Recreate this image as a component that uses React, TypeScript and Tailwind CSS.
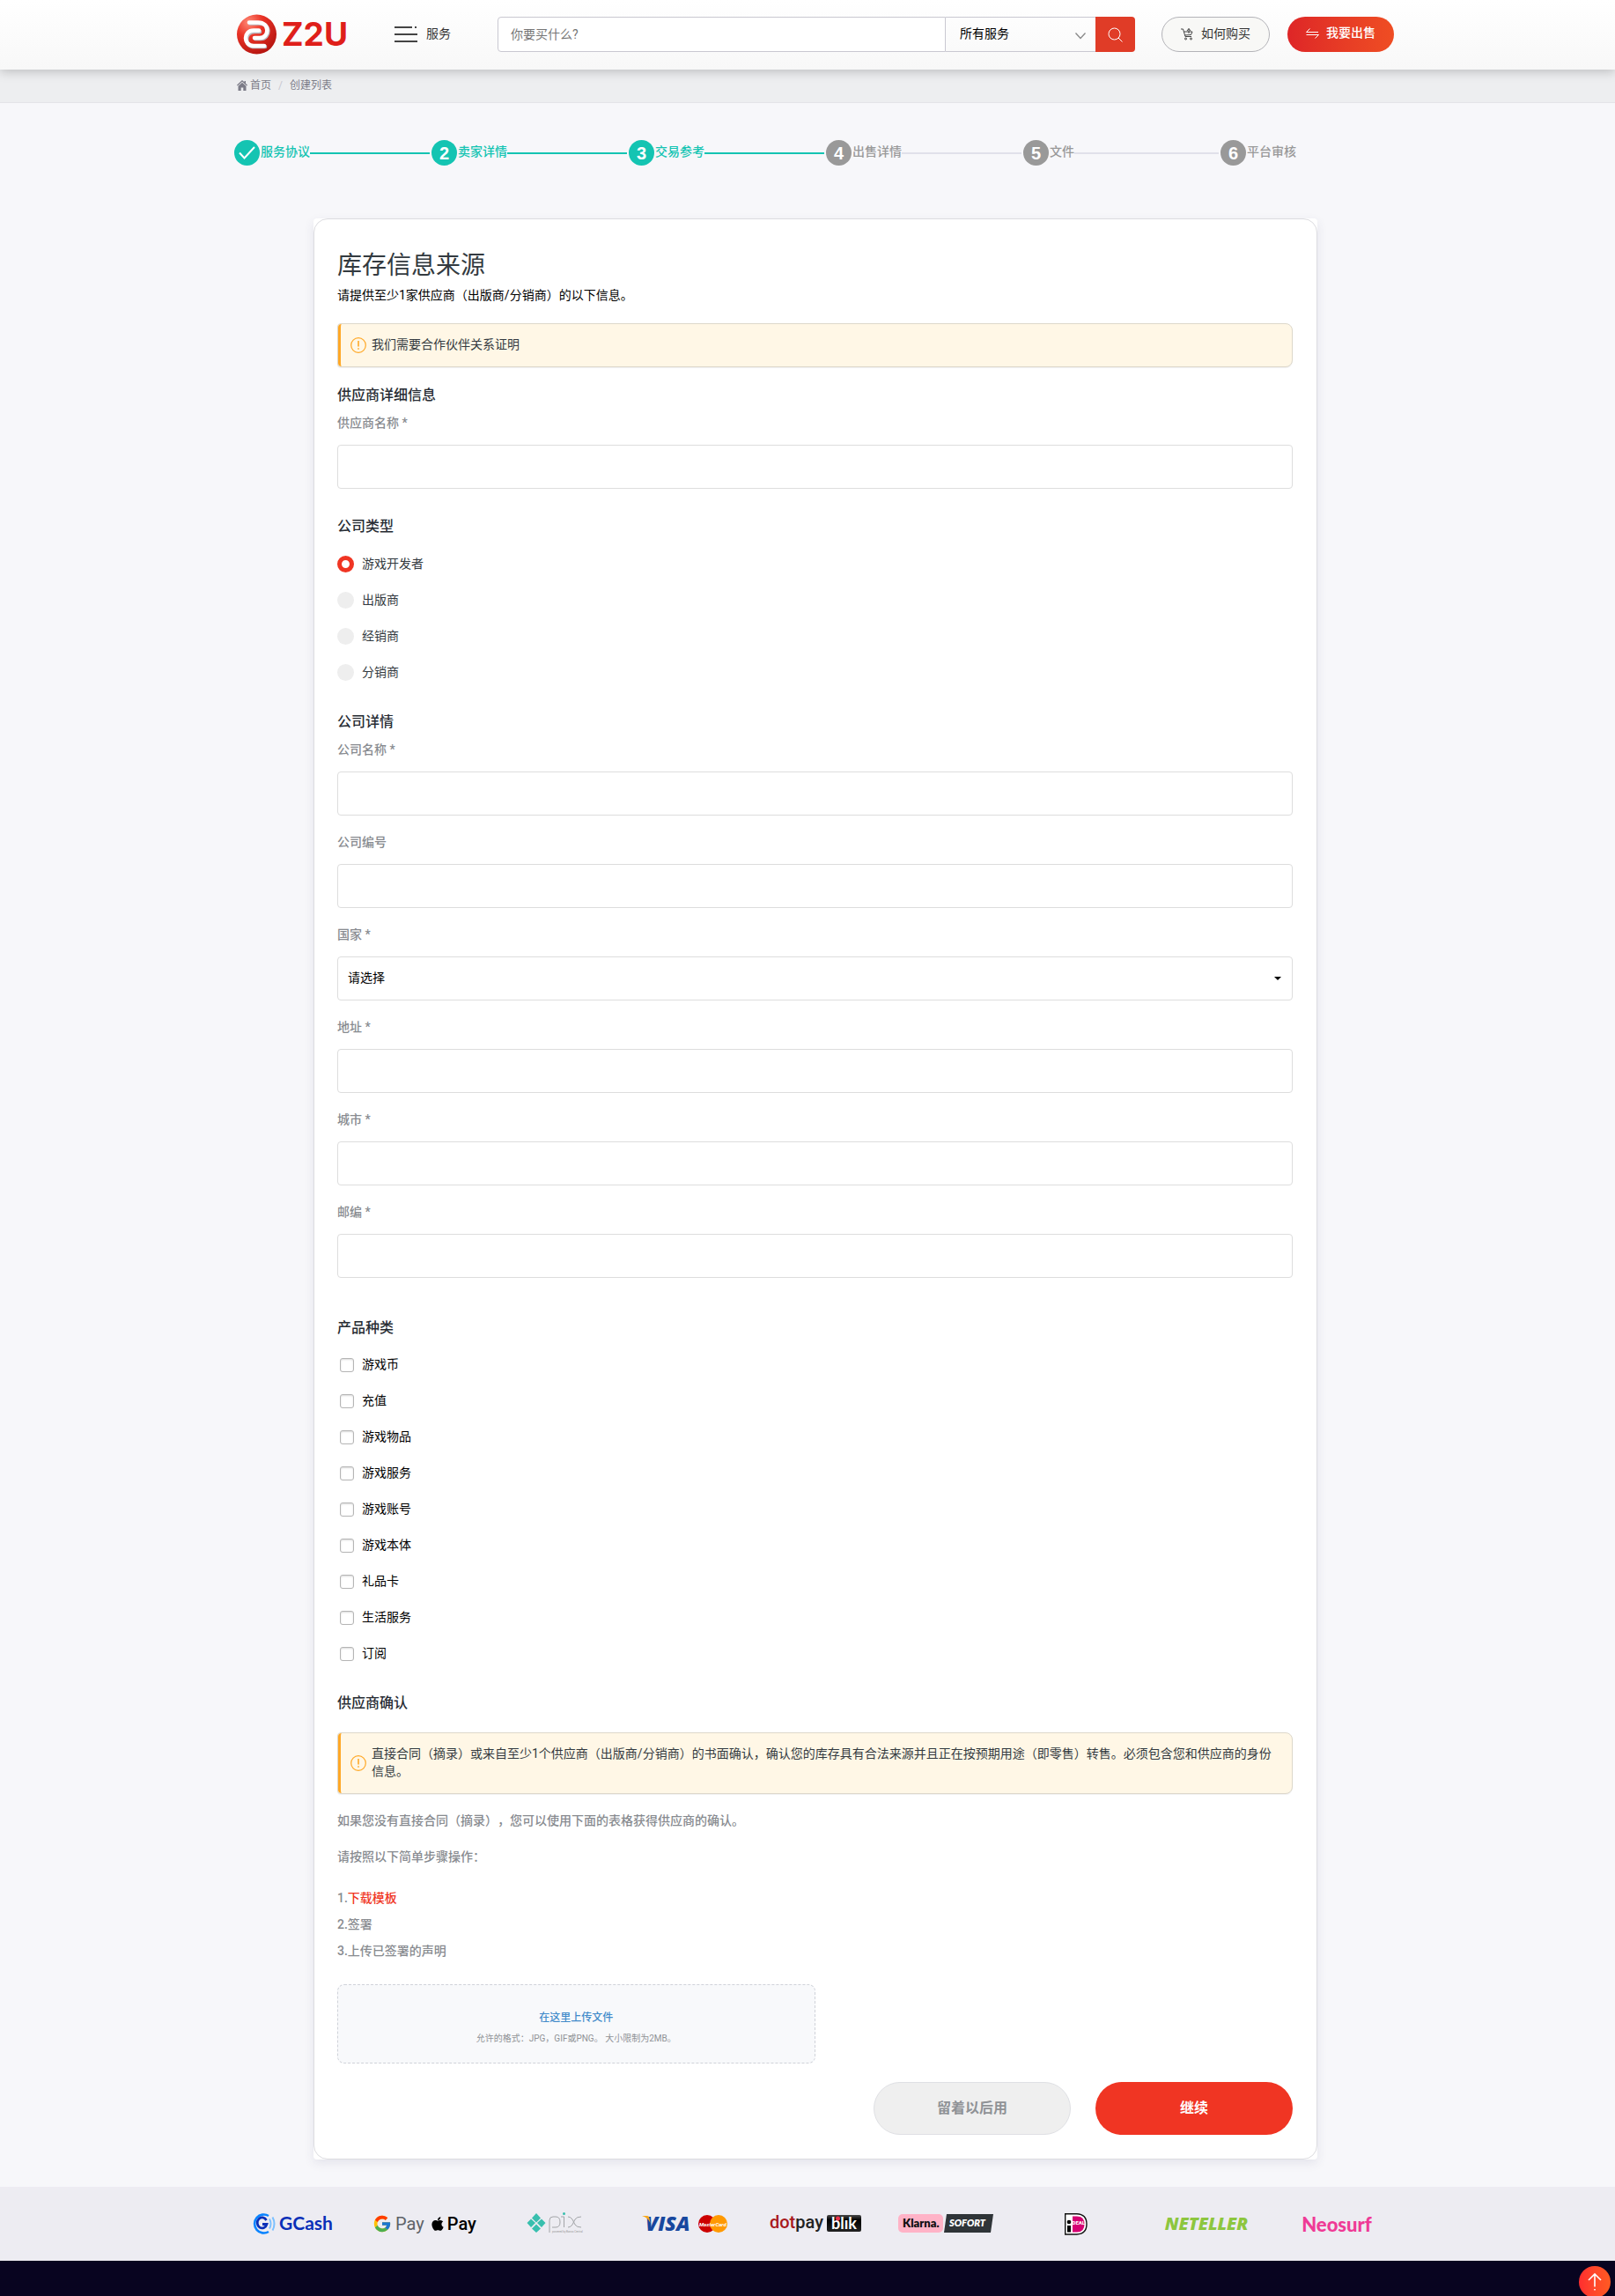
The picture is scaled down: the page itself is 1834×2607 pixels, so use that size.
import { ReactNode, useId, useState } from "react";
import { clsx } from "clsx";
import { FcGoogle } from "react-icons/fc";
import { FaApple } from "react-icons/fa";

const steps = [
  { label: "服务协议", state: "done" },
  { label: "卖家详情", state: "active" },
  { label: "交易参考", state: "active" },
  { label: "出售详情", state: "todo" },
  { label: "文件", state: "todo" },
  { label: "平台审核", state: "todo" },
];

const companyTypes = ["游戏开发者", "出版商", "经销商", "分销商"];

const productTypes = [
  "游戏币",
  "充值",
  "游戏物品",
  "游戏服务",
  "游戏账号",
  "游戏本体",
  "礼品卡",
  "生活服务",
  "订阅",
];

function Logo() {
  return (
    <svg className="overflow-visible" width="128" height="46" viewBox="0 0 128 46" role="img" aria-label="Z2U">
      <defs>
        <radialGradient id="ball" cx="0.3" cy="0.2" r="0.9">
          <stop offset="0" stopColor="#ff8a76" />
          <stop offset="0.4" stopColor="#ea3326" />
          <stop offset="1" stopColor="#b0120e" />
        </radialGradient>
      </defs>
      <circle cx="22.5" cy="23" r="22.5" fill="url(#ball)" />
      <g fill="none" strokeWidth="4.600" strokeLinecap="round" strokeLinejoin="round">
        <path
          d="M15 10.500H25C39 10.500 38 28 27 28H21M32 37H20C8 37 8 20 20 20H26"
          stroke="#b9b9c0"
        />
        <path
          d="M14 9.500H24C38 9.500 37 27 26 27H20M31 36H19C7 36 7 18.500 19 18.500H25"
          stroke="#fff"
        />
      </g>
      <text x="51" y="36" fontSize="37" fontWeight="700" fill="#df1f1a" fontFamily="Inter, sans-serif">
        Z2U
      </text>
    </svg>
  );
}

function Header() {
  return (
    <header className="relative z-10 bg-linear-to-b from-white to-[#f8f8f8] pl-[18px] shadow-[0_2px_12px_rgba(0,0,0,0.22)]">
      <div className="mx-auto flex h-[79px] max-w-[1314px] items-center pb-px">
        <a href="#home" className="w-[179px] shrink-0">
          <Logo />
        </a>
        <button type="button" className="flex w-[117px] shrink-0 items-center gap-2.5 text-sm text-[#333]">
          <svg width="26" height="20" viewBox="0 0 26 20" fill="none" stroke="#444" strokeWidth="2">
            <path d="M0 2h20M23 2h2M0 10h26M0 18h26" />
          </svg>
          <span className="pb-[3px]">服务</span>
        </button>
        <form className="flex h-10 min-w-0 flex-1" onSubmit={(e) => e.preventDefault()}>
          <input
            type="text"
            aria-label="搜索"
            placeholder="你要买什么?"
            className="min-w-0 flex-1 rounded-l border border-[#c9c8d1] bg-white px-3.5 pb-px text-sm placeholder:text-[#757575]"
          />
          <div className="relative w-[170px]">
            <select
              aria-label="服务类别"
              className="h-10 w-full appearance-none border-y border-[#c9c8d1] bg-transparent pb-0.5 pl-4 text-sm text-black"
            >
              <option>所有服务</option>
            </select>
            <svg
              className="pointer-events-none absolute top-[18px] right-[11px]"
              width="12"
              height="8"
              viewBox="0 0 12 8"
              fill="none"
              stroke="#888"
              strokeWidth="1.3"
            >
              <path d="M0.5 0.5 6 6.5l5.500-6" />
            </svg>
          </div>
          <button type="submit" aria-label="搜索" className="grid w-[45px] place-items-center rounded-r bg-[#e03c27]">
            <svg width="17" height="17" viewBox="0 0 17 17" fill="none" stroke="#fff" strokeWidth="1">
              <circle cx="7.500" cy="7.500" r="6.500" />
              <path d="m12 12 4.500 4.500" />
            </svg>
          </button>
        </form>
        <a
          href="#how"
          className="ml-[30px] flex h-10 w-[123px] shrink-0 items-center justify-center gap-2 rounded-full border border-[#b3b3b8] bg-[#f8f8f6] text-sm text-[#333]"
        >
          <svg width="15" height="14" viewBox="0 0 15 14" fill="none" stroke="#444" strokeWidth="1">
            <path d="M0 1h2.500l2.500 8.500h7M3.500 4h9.500l-1.500 3.500-7 .5M9 0.500V6M7 3l2-2.500L11 3" />
            <circle cx="5.500" cy="12" r="1" />
            <circle cx="11.500" cy="12" r="1" />
          </svg>
          <span className="pb-[3px]">如何购买</span>
        </a>
        <a
          href="#sell"
          className="ml-5 flex h-10 w-[121px] shrink-0 items-center justify-center gap-2 rounded-full bg-linear-to-r from-[#de2527] to-[#ef4d23] pb-[3px] text-sm font-medium text-white"
        >
          <svg width="15" height="12" viewBox="0 0 15 12" fill="none" stroke="#fff" strokeWidth="1">
            <path d="M4.500 0.500 0.500 4.500H14M0.500 7.500h14l-4 4" />
          </svg>
          <span className="pb-0.5">我要出售</span>
        </a>
      </div>
    </header>
  );
}

function Breadcrumb() {
  return (
    <nav className="border-b border-[#e4e4e8] bg-[#edeef0] pl-[18px]">
      <ol className="mx-auto flex h-[37px] max-w-[1314px] items-center pb-px text-xs text-[#7c7c88]">
        <li>
          <a href="#home" className="flex items-center gap-[3px]">
            <svg width="12" height="12" viewBox="0 0 12 12" fill="#7c7c88">
              <path d="M6 0 0 5.500l.8.9L6 1.700l5.200 4.700.8-.9-2-1.800V1H8.500v1.300zM6 2.700 1.500 6.700V12h3.200V8.500h2.600V12h3.200V6.700z" />
            </svg>
            首页
          </a>
        </li>
        <li className="mx-2 text-[#c8c8d0]">/</li>
        <li>创建列表</li>
      </ol>
    </nav>
  );
}

function Stepper() {
  return (
    <ol className="flex max-w-[1206px] pt-[42px]">
      {steps.map((step, i) => {
        const last = i === steps.length - 1;
        const reached = step.state !== "todo";
        return (
          <li
            key={step.label}
            className={clsx(
              "flex items-center text-sm font-medium",
              last ? "shrink-0" : "flex-1",
              reached ? "text-[#14c4b2]" : "text-[#999]",
            )}
          >
            <span
              className={clsx(
                "mr-px grid size-[29px] shrink-0 place-items-center rounded-full font-['Liberation_Sans',sans-serif] text-xl font-bold text-white",
                reached ? "bg-[#14c4b2]" : "bg-[#999]",
              )}
            >
              {step.state === "done" ? (
                <svg width="19" height="15" viewBox="0 0 19 15" fill="none" stroke="#fff" strokeWidth="2">
                  <path d="m1 7.500 5.500 6L18 1" />
                </svg>
              ) : (
                i + 1
              )}
            </span>
            <span className="shrink-0 pb-[3px]">{step.label}</span>
            {!last && <span className={clsx("mr-0.5 h-0.5 flex-1", reached ? "bg-[#14c4b2]" : "bg-[#e1e1ea]")} />}
          </li>
        );
      })}
    </ol>
  );
}

function Notice({ children, className }: { children: ReactNode; className?: string }) {
  return (
    <div
      className={clsx(
        "rounded-sm rounded-r-lg border border-[#ddd8cb] bg-[#fff7e6] shadow-[0_1px_1px_rgba(0,0,0,0.06)]",
        className,
      )}
    >
      <div className="flex items-center rounded-sm border-l-3 border-[#ffa826] pr-5 pl-[11px]">
        <svg className="shrink-0" width="18" height="18" viewBox="0 0 18 18" fill="none" stroke="#ffa826">
          <circle cx="9" cy="9" r="8.300" strokeWidth="1.2" />
          <path d="M9 4v6.500" strokeWidth="1.600" />
          <path d="M9 12.200v1.600" strokeWidth="1.600" />
        </svg>
        <p className="pt-[13px] pb-[15px] pl-1.5 text-sm text-[#333a40]">{children}</p>
      </div>
    </div>
  );
}

function SectionTitle({ children, className }: { children: ReactNode; className?: string }) {
  return <h2 className={clsx("text-base font-medium text-[#272c33]", className)}>{children}</h2>;
}

function Field({ label, className }: { label: string; className: string }) {
  const id = useId();
  return (
    <div className={className}>
      <label htmlFor={id} className="block text-sm font-medium text-[#888b90]">
        {label}
      </label>
      <input
        id={id}
        type="text"
        className="mt-[15px] block h-[50px] w-full rounded border border-[#ddd] px-3 text-sm"
      />
    </div>
  );
}

function CountrySelect() {
  return (
    <div className="mt-5">
      <label htmlFor="country" className="block text-sm font-medium text-[#888b90]">
        国家 *
      </label>
      <div className="relative mt-[15px]">
        <select
          id="country"
          className="block h-[50px] w-full appearance-none rounded border border-[#ddd] bg-white px-[11px] pb-0.5 text-sm text-black"
        >
          <option>请选择</option>
        </select>
        <span className="pointer-events-none absolute top-[23px] right-[13px] border-x-4 border-t-4 border-x-transparent border-t-black" />
      </div>
    </div>
  );
}

function Payments() {
  return (
    <section className="bg-[#edecf2] pl-[18px]">
      <ul className="mx-auto grid h-[84px] max-w-[1332px] grid-cols-9 place-items-center">
        <li>
          <svg className="overflow-visible" width="96" height="28" viewBox="0 -2 96 28" role="img" aria-label="GCash">
            <g fill="none">
              <path d="M19 3A10.500 10.500 0 1 0 19 21" stroke="#0a84ff" strokeWidth="2.600" />
              <path d="M16.500 8A5.500 6 0 1 0 17 12.500H12" stroke="#0a2fb8" strokeWidth="2.800" />
              <path d="M20 6.500q3 5.500 0 11M23.500 4.500q4 7.500 0 15" stroke="#7cc0ff" strokeWidth="2" />
            </g>
            <text x="31" y="19" fontSize="21" fontWeight="700" fill="#0a2fb8" fontFamily="Lato, sans-serif">
              GCash
            </text>
          </svg>
        </li>
        <li className="flex items-center" aria-label="Google Pay, Apple Pay">
          <FcGoogle size={22} />
          <span className="ml-1 text-xl text-[#5f6368]">Pay</span>
          <FaApple size={18} className="ml-1.5" />
          <span className="ml-0.5 text-xl font-medium">Pay</span>
        </li>
        <li>
          <svg className="overflow-visible" width="64" height="28" viewBox="0 -1 64 28" role="img" aria-label="pix">
            <g fill="#38bfae">
              <path d="M11 1 6 6.500l5 5 5-5zM11 13.500l-5 5 5 4.500 5-4.500zM5 7.500 0.500 12 5 17l5-5zM17 7.500 12 12l5 5 4.500-5z" />
              <circle cx="42.500" cy="1.500" r="1.500" />
            </g>
            <path
              d="M26 23V9q0-4 4-4h3q5 0 5 6t-5 6h-4M39 5h3.500v12M47 5q3 0 5 3l3 6q2 3 7 3M47 17q3 0 5-3l3-6q2-3 7-3"
              fill="none"
              stroke="#a3a5a8"
            />
            <text x="29" y="23" fontSize="3" fill="#999" fontFamily="Roboto, sans-serif">
              powered by Banco Central
            </text>
          </svg>
        </li>
        <li>
          <svg
            className="overflow-visible"
            width="98"
            height="32"
            viewBox="0 -5 98 32"
            role="img"
            aria-label="VISA MasterCard"
          >
            <text
              x="4"
              y="19"
              fontSize="23"
              fontWeight="800"
              fontStyle="italic"
              fill="#17479e"
              fontFamily="Open Sans, sans-serif"
            >
              VISA
            </text>
            <path d="M0 2h6q2 0 2.500 3l1 5Q7 4 0 2z" fill="#f7a81b" />
            <circle cx="74" cy="11" r="10" fill="#cc0000" />
            <circle cx="87" cy="11" r="10" fill="#ff9900" />
            <text
              x="65"
              y="14"
              fontSize="6"
              fontWeight="700"
              fontStyle="italic"
              fill="#fff"
              fontFamily="Roboto, sans-serif"
            >
              MasterCard
            </text>
          </svg>
        </li>
        <li>
          <svg
            className="overflow-visible"
            width="104"
            height="30"
            viewBox="0 -4 104 30"
            role="img"
            aria-label="dotpay blik"
          >
            <defs>
              <linearGradient id="blik" x2="0" y2="1">
                <stop stopColor="#4a4a4a" />
                <stop offset="0.3" stopColor="#000" />
                <stop offset="1" stopColor="#222" />
              </linearGradient>
            </defs>
            <text x="0" y="16" fontSize="20" fontWeight="500" fill="#222" fontFamily="Roboto, sans-serif">
              <tspan fill="#a8191d">dot</tspan>pay
            </text>
            <rect x="65" y="1" width="39" height="19" rx="2" fill="url(#blik)" />
            <text x="70" y="17" fontSize="18" fontWeight="700" fill="#fff" fontFamily="Lato, sans-serif">
              blık
            </text>
            <circle cx="77.500" cy="5" r="2.500" fill="#e8304a" />
          </svg>
        </li>
        <li>
          <svg
            className="overflow-visible"
            width="108"
            height="22"
            viewBox="0 0 108 22"
            role="img"
            aria-label="Klarna SOFORT"
          >
            <rect width="51" height="21" rx="5" fill="#ffb3c7" />
            <text x="5" y="15" fontSize="13" fontWeight="800" fill="#111" fontFamily="Lato, sans-serif">
              Klarna.
            </text>
            <path d="M55 0h53l-3 21H52z" fill="#2f3438" />
            <text
              x="58"
              y="14"
              fontSize="11"
              fontWeight="800"
              fontStyle="italic"
              fill="#fff"
              fontFamily="Lato, sans-serif"
            >
              SOFORT
            </text>
          </svg>
        </li>
        <li>
          <svg width="26" height="25" viewBox="0 0 26 25" role="img" aria-label="iDEAL">
            <path d="M0.700 0.700h13Q25 1 25 12.300T13.700 24H0.700z" fill="#fff" stroke="#111" strokeWidth="1.400" />
            <path d="M9 3.500h5q8.500 0 8.500 9T14 21.500H9z" fill="#d50072" />
            <circle cx="5" cy="10" r="2.300" />
            <path d="M3 14h4v7.500H3z" />
            <text x="8.500" y="12.500" fontSize="6" fontWeight="800" fill="#fff" fontFamily="Roboto, sans-serif">
              DEAL
            </text>
          </svg>
        </li>
        <li className="font-['Open_Sans',sans-serif] text-xl font-extrabold text-[#8dc63f] italic">NETELLER</li>
        <li className="font-[Lato,sans-serif] text-[22px] font-black text-[#ef3a96]">Neosurf</li>
      </ul>
    </section>
  );
}

export default function App() {
  const [companyType, setCompanyType] = useState(companyTypes[0]);

  return (
    <div className="bg-[#f7f7fa] font-[Roboto,'Noto_Sans_CJK_SC',sans-serif]">
      <Header />
      <Breadcrumb />
      <main className="pl-[18px]">
        <div className="mx-auto max-w-[1320px] pb-[31px]">
          <Stepper />
          <div className="mx-auto mt-[60px] max-w-[1140px] rounded bg-white shadow-[0_4px_12px_rgba(60,60,110,0.1)]">
            <form
              className="rounded-2xl border border-[#dcdce0] pt-[37px] pr-[27px] pb-[27px] pl-[26px]"
              onSubmit={(e) => e.preventDefault()}
            >
              <h1 className="text-[28px] leading-8 text-[#333a40]">库存信息来源</h1>
              <p className="mt-[7px] text-sm text-black">请提供至少1家供应商（出版商/分销商）的以下信息。</p>
              <Notice className="mt-[22px]">我们需要合作伙伴关系证明</Notice>

              <SectionTitle className="mt-5">供应商详细信息</SectionTitle>
              <Field label="供应商名称 *" className="mt-[9px]" />

              <SectionTitle className="mt-[31px]">公司类型</SectionTitle>
              <div className="mt-2.5">
                {companyTypes.map((type) => (
                  <label key={type} className="flex h-[41px] items-center gap-[9px] text-sm text-[#333a40]">
                    <input
                      type="radio"
                      name="company-type"
                      checked={companyType === type}
                      onChange={() => setCompanyType(type)}
                      className="size-[19px] appearance-none rounded-full bg-[#eee] checked:border-5 checked:border-[#f03523] checked:bg-white"
                    />
                    <span className="pb-0.5">{type}</span>
                  </label>
                ))}
              </div>

              <SectionTitle className="mt-6">公司详情</SectionTitle>
              <Field label="公司名称 *" className="mt-[9px]" />
              <Field label="公司编号" className="mt-5" />
              <CountrySelect />
              <Field label="地址 *" className="mt-5" />
              <Field label="城市 *" className="mt-5" />
              <Field label="邮编 *" className="mt-5" />

              <SectionTitle className="mt-[45px]">产品种类</SectionTitle>
              <div className="mt-[9px]">
                {productTypes.map((type) => (
                  <label key={type} className="flex h-[41px] items-center gap-[9px] pl-[3px] text-sm text-black">
                    <input
                      type="checkbox"
                      className="size-4 appearance-none rounded-[3px] border border-[#b5b5b5] shadow-[inset_0_1px_2px_rgba(0,0,0,0.15)] checked:bg-[#f03523]"
                    />
                    <span className="pb-0.5">{type}</span>
                  </label>
                ))}
              </div>

              <SectionTitle className="mt-6">供应商确认</SectionTitle>
              <Notice className="mt-[21px]">
                直接合同（摘录）或来自至少1个供应商（出版商/分销商）的书面确认，确认您的库存具有合法来源并且正在按预期用途（即零售）转售。必须包含您和供应商的身份信息。
              </Notice>

              <div className="mt-5 text-sm font-medium text-[#888b90]">
                <p className="[text-spacing-trim:space-all]">
                  如果您没有直接合同（摘录），您可以使用下面的表格获得供应商的确认。
                </p>
                <p className="mt-[21px]">请按照以下简单步骤操作：</p>
                <ol className="mt-[27px] space-y-2.5">
                  <li>
                    1.
                    <a href="#template" className="text-[#f03523]">
                      下载模板
                    </a>
                  </li>
                  <li>2.签署</li>
                  <li>3.上传已签署的声明</li>
                </ol>
              </div>

              <button
                type="button"
                className="mt-7 flex h-[90px] w-1/2 flex-col items-center justify-center gap-2 rounded-lg border border-dashed border-[#cfd2d9] bg-[#f8f9fb] pt-2.5"
              >
                <span className="text-xs font-medium text-[#428bca]">在这里上传文件</span>
                <span className="text-[10px] leading-4 text-[#8f9296]">
                  允许的格式：JPG，GIF或PNG。 大小限制为2MB。
                </span>
              </button>

              <div className="mt-[21px] flex justify-end gap-7 text-base font-bold">
                <button
                  type="button"
                  className="h-[60px] w-56 rounded-full border border-[#dfe0e4] bg-[#efefef] text-[#8f9296]"
                >
                  留着以后用
                </button>
                <button type="submit" className="h-[60px] w-56 rounded-full bg-[#f03523] text-white">
                  继续
                </button>
              </div>
            </form>
          </div>
        </div>
      </main>
      <Payments />
      <footer className="relative h-10 overflow-hidden bg-[#080420]">
        <button
          type="button"
          aria-label="返回顶部"
          className="absolute top-1.5 right-[5px] grid size-9 place-items-center rounded-full bg-linear-to-r from-[#ff2d2f] to-[#ff5a22]"
        >
          <svg width="16" height="20" viewBox="0 0 16 20" fill="none" stroke="#fff" strokeWidth="1.600">
            <path d="M8 15.500V1M1 8l7-7 7 7M8 18v1.500" />
          </svg>
        </button>
      </footer>
    </div>
  );
}
